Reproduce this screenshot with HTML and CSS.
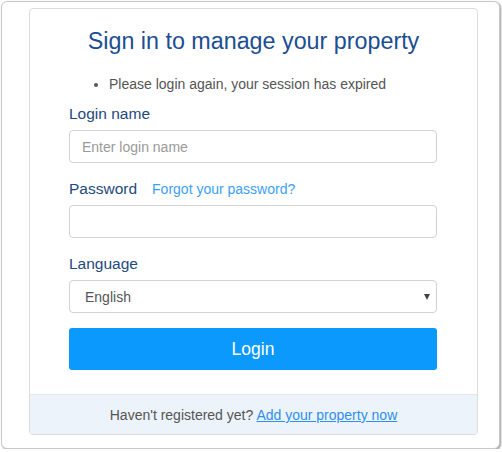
FILE: index.html
```html
<!DOCTYPE html>
<html>
<head>
<meta charset="utf-8">
<link rel="stylesheet" href="styles.css">
</head>
<body>
<div class="frame">
  <div class="card">
    <div class="card-body">
      <h1 class="title">Sign in to manage your property</h1>
      <ul class="messages">
        <li>Please login again, your session has expired</li>
      </ul>
      <div class="group">
        <div class="label-row"><label class="label">Login name</label></div>
        <input class="field" type="text" placeholder="Enter login name">
      </div>
      <div class="group">
        <div class="label-row"><label class="label">Password</label><a class="forgot" href="#">Forgot your password?</a></div>
        <input class="field" type="password">
      </div>
      <div class="group">
        <div class="label-row"><label class="label">Language</label></div>
        <div class="select-wrap">
          <select class="field select"><option>English</option></select>
        </div>
      </div>
      <button class="btn" type="button">Login</button>
    </div>
    <div class="card-footer">Haven't registered yet? <a class="add" href="#">Add your property now</a></div>
  </div>
</div>
</body>
</html>
```

FILE: styles.css
```css
html, body {
  margin: 0;
  padding: 0;
  background: #ffffff;
}
body {
  font-family: "Liberation Sans", Arial, sans-serif;
}
.frame {
  box-sizing: border-box;
  width: 499px;
  height: 448px;
  margin: 1px 0 0 1px;
  border: 1px solid #c9c9c9;
  border-radius: 6px;
  box-shadow: 1px 1px 2px rgba(0, 0, 0, 0.4);
  background: #fff;
  padding: 6px 0 0 27px;
}
.card {
  box-sizing: border-box;
  width: 449px;
  border: 1px solid #dcdcdc;
  border-radius: 4px;
  background: #fff;
}
.card-body {
  padding: 19px 39px 24px 39px;
}
.title {
  margin: 0;
  font-size: 23.3px;
  line-height: 27px;
  font-weight: normal;
  color: #1c4e91;
  text-align: center;
}
.messages {
  margin: 19px 0 10px 0;
  padding-left: 40px;
  font-size: 14px;
  line-height: 20px;
  color: #555;
}
.group {
  margin-bottom: 16px;
}
.label-row {
  display: flex;
  align-items: baseline;
  height: 20px;
  margin-bottom: 6px;
}
.label {
  font-size: 15.5px;
  line-height: 20px;
  color: #234a7c;
}
.forgot {
  margin-left: 15px;
  font-size: 14px;
  color: #3c9ff6;
  text-decoration: none;
}
.field {
  display: block;
  box-sizing: border-box;
  width: 368px;
  height: 33px;
  margin: 0;
  padding: 0 12px;
  border: 1px solid #d2d2d2;
  border-radius: 4px;
  font-family: "Liberation Sans", Arial, sans-serif;
  font-size: 14px;
  color: #555;
  background: #fff;
  outline: none;
}
.field::placeholder {
  color: #9a9a9a;
}
.select-wrap {
  position: relative;
  width: 368px;
}
.select {
  -webkit-appearance: none;
  appearance: none;
  padding-left: 15px;
  color: #555;
}
.select-wrap::after {
  content: "";
  position: absolute;
  right: 7px;
  top: 14px;
  width: 0;
  height: 0;
  border-left: 3.5px solid transparent;
  border-right: 3.5px solid transparent;
  border-top: 6px solid #444;
  pointer-events: none;
}
.group:last-of-type {
  margin-bottom: 15px;
}
.btn {
  display: block;
  width: 368px;
  height: 42px;
  margin: 0;
  padding: 0;
  border: none;
  border-radius: 3px;
  background: #0b99fd;
  color: #fff;
  font-family: "Liberation Sans", Arial, sans-serif;
  font-size: 17.5px;
}
.card-footer {
  height: 40px;
  border-top: 1px solid #dfe7f0;
  border-radius: 0 0 3px 3px;
  background: #ecf3fb;
  text-align: center;
  font-size: 14px;
  line-height: 20px;
  padding-top: 10px;
  box-sizing: border-box;
  color: #555;
}
.add {
  color: #2f8ff0;
  text-decoration: underline;
}
```
